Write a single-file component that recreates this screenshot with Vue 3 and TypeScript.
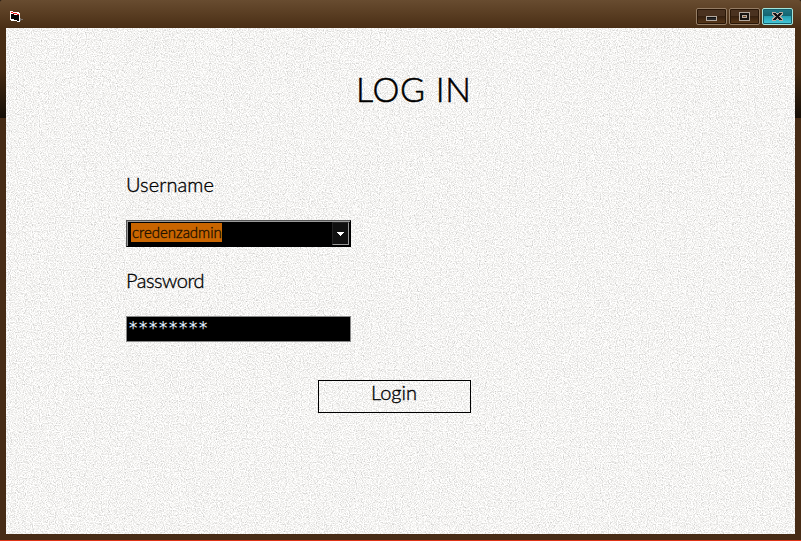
<script setup lang="ts">
import { ref } from 'vue'

const username = ref<string>('credenzadmin')
const passwordMask = ref<string>('*'.repeat(8))
</script>

<template>
  <main class="window">
    <header class="titlebar">
      <svg class="app-icon" width="14" height="12" viewBox="0 0 14 12" shape-rendering="crispEdges">
        <path d="M0 0h3v1h6v1h1v9H7v-1H1V9H0z" fill="#fff" />
        <path d="M1 3h3v1h5v6H7V9H4V8H1z" fill="#080808" />
        <path d="M1 1h2v1H1zM3 2h4v1H3zM7 3h2v1H7z" fill="#f01818" />
        <path d="M10 7h1v1h2v1h-2v1h-1z" fill="#77716c" />
      </svg>
      <div class="controls">
        <button class="control" aria-label="Minimize">
          <svg width="11" height="9" viewBox="0 0 11 9" shape-rendering="crispEdges">
            <path d="M0 4h11v5H0z" fill="#b5aaa0" /><path d="M1 5h9v3H1z" fill="#111" /><path d="M1 6h9v2H1z" fill="#29292b" />
          </svg>
        </button>
        <button class="control" aria-label="Maximize">
          <svg width="11" height="9" viewBox="0 0 11 9" shape-rendering="crispEdges">
            <path d="M0 0h11v9H0z" fill="#b5aaa0" /><path d="M1 1h9v7H1z" fill="#171411" /><path d="M3 3h5v3H3z" fill="#b5aaa0" /><path d="M4 4h3v1H4z" fill="#70431d" />
          </svg>
        </button>
        <button class="control close" aria-label="Close">
          <svg width="11" height="9" viewBox="0 0 11 9" shape-rendering="crispEdges">
            <path d="M0 0h4v1h3V0h4v3h-1v1H9v1h1v1h1v3H7V8H4v1H0V6h1V5h1V4H1V3H0z" fill="#b5aaa0" />
            <path d="M1 1h3v1h1v1h1V2h1V1h3v1H9v1H8v1H7v1h1v1h1v1h1v1H7V7H6V6H5v1H4v1H1V7h1V6h1V5h1V4H3V3H2V2H1z" fill="#141416" />
          </svg>
        </button>
      </div>
    </header>
    <section class="client">
      <svg class="paper" width="789" height="506" aria-hidden="true">
        <filter id="grain" x="0" y="0" width="100%" height="100%" color-interpolation-filters="sRGB">
          <feTurbulence type="fractalNoise" baseFrequency="0.87" numOctaves="3" seed="8" />
          <feColorMatrix values=".34 .24 0 0 .668  .34 .24 0 0 .665  .34 .24 0 0 .658  0 0 0 0 1" />
        </filter>
        <rect width="789" height="506" filter="url(#grain)" />
      </svg>
      <form class="form" @submit.prevent>
        <h1>LOG IN</h1>
        <label class="name-label">Username</label>
        <div class="combo">
          <span class="selected">{{ username }}</span>
          <span class="arrow">
            <svg width="7" height="4" viewBox="0 0 7 4" shape-rendering="crispEdges"><path d="M0 0h7v1H6v1H5v1H4v1H3V3H2V2H1V1H0z" fill="#fff" /></svg>
          </span>
        </div>
        <label class="password-label">Password</label>
        <div class="password">{{ passwordMask }}</div>
        <button class="login" type="submit">Login</button>
      </form>
    </section>
  </main>
</template>

<style>
body { margin: 0; overflow: hidden; background: #17100b; }
</style>

<style scoped>
* { box-sizing: border-box; }
.window {
  width: 801px;
  height: 541px;
  padding: 0 6px;
  background:
    linear-gradient(#e23417, #e23417) 0 540px / 801px 1px no-repeat,
    linear-gradient(#684c30 0, #593d22 14px, #492e15 28px, #472c14 70px, #171008 117px) 0 0 / 801px 118px no-repeat,
    #472c16;
  color: #000;
  font-family: Lato, "Open Sans", sans-serif;
  border-top-left-radius: 2px;
  border-top-right-radius: 2px;
}
.titlebar {
  height: 28px;
  display: flex;
  justify-content: space-between;
  align-items: flex-start;
  padding: 8px 2px 0 4px;
}
.app-icon { margin-top: 3px; }
.controls { display: flex; gap: 2px; }
.control {
  width: 31px;
  height: 17px;
  padding: 0 0 1px;
  border: 1px solid #957d65;
  border-radius: 2px;
  box-shadow: inset 0 0 0 1px #2b1808;
  background: linear-gradient(#4a3220 0 7px, #352010 7px, #5b3919 100%);
  display: flex;
  align-items: center;
  justify-content: center;
}
.close {
  border-color: #a5e5dc;
  box-shadow: inset 0 0 0 1px #16616d;
  background: linear-gradient(#207885 0, #146470 7px, #239db0 7px, #46cbdc 100%);
}
.client { width: 789px; height: 506px; display: grid; background: #f3f2f0; }
.paper { grid-area: 1 / 1; display: block; }
.form {
  grid-area: 1 / 1;
  position: relative;
  display: flex;
  flex-direction: column;
  align-items: flex-start;
  padding: 40px 0 0 120px;
}
h1 {
  margin: 0 0 0 230px;
  height: 42px;
  line-height: 42px;
  font-size: 34px;
  font-weight: 300;
  letter-spacing: .7px;
  white-space: nowrap;
  -webkit-text-stroke: .55px #000;
}
.name-label, .password-label { height: 30px; line-height: 30px; font-size: 20px; font-weight: 300; -webkit-text-stroke: .35px #000; }
.name-label { margin-top: 59px; letter-spacing: .1px; }
.combo {
  width: 225px;
  height: 27px;
  margin-top: 21px;
  padding: 1px 1px 1px 4px;
  display: flex;
  justify-content: space-between;
  background: #000;
  border: 1px solid #000;
  border-top-color: #555;
  border-left-color: #555;
  box-shadow: inset 1px 1px #999;
}
.selected {
  width: 91px;
  height: 19px;
  margin-top: 1px;
  padding-left: 1px;
  line-height: 18px;
  background: #c96500;
  color: #211100;
  font-size: 15px;
  font-weight: 300;
  letter-spacing: -.02px;
  -webkit-text-stroke: .35px #211100;
}
.arrow {
  width: 17px;
  height: 23px;
  display: flex;
  align-items: center;
  justify-content: center;
  background: #101010;
  border: 1px solid #222;
  border-right-color: #999;
  border-bottom-color: #999;
}
.password-label { margin-top: 18px; letter-spacing: -.45px; }
.password {
  width: 225px;
  height: 26px;
  margin-top: 21px;
  padding-left: 1px;
  border: 1px solid #888;
  background: #000;
  color: #e4eeff;
  font: 17px/23px "DejaVu Sans Mono", monospace;
  letter-spacing: -.23px;
}
.login {
  width: 153px;
  height: 33px;
  margin: 38px 0 0 192px;
  padding: 0 1px 9px 0;
  border: 1px solid #000;
  background: transparent;
  color: #000;
  font: 300 20px/22px Lato, sans-serif;
  -webkit-text-stroke: .35px #000;
}
</style>
